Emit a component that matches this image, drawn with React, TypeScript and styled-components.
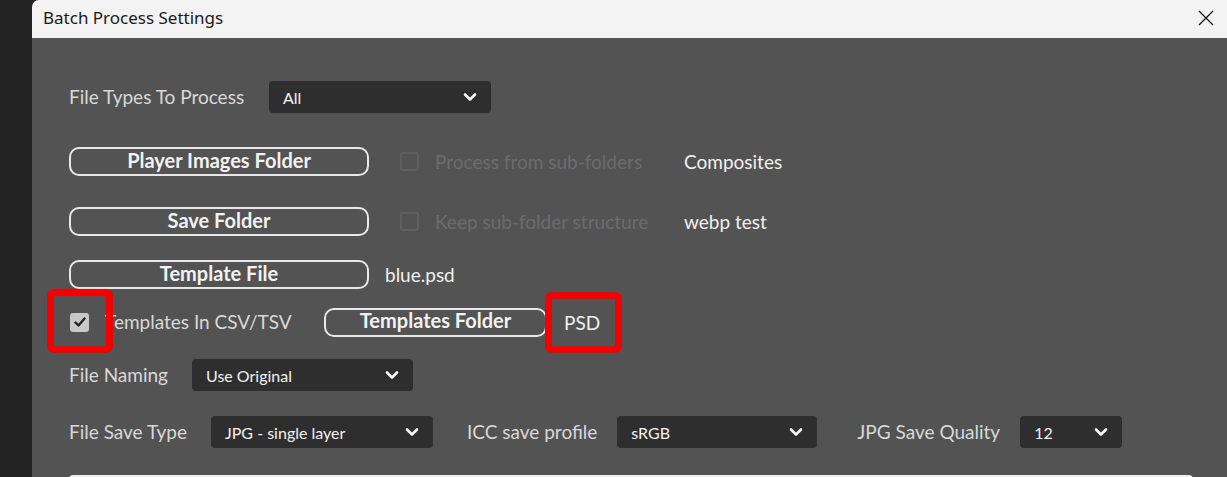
import React from 'react';
import styled, { createGlobalStyle } from 'styled-components';

const GlobalStyle = createGlobalStyle`
  html, body {
    margin: 0;
    padding: 0;
    background: #232323;
    overflow: hidden;
  }
  * {
    box-sizing: border-box;
  }
`;

const Screen = styled.div`
  display: flex;
  width: 1227px;
  height: 477px;
  background: #232323;
  padding-left: 32px;
`;

const Dialog = styled.div`
  flex: 1;
  display: flex;
  flex-direction: column;
  background: #535353;
  border-top-left-radius: 7px;
  overflow: hidden;
  margin-right: -20px;
`;

const TitleBar = styled.div`
  height: 38px;
  flex-shrink: 0;
  display: flex;
  align-items: center;
  justify-content: space-between;
  background: #f3f3f3;
  padding: 0 11px 3px 11px;
  font-family: 'Noto Sans', sans-serif;
  font-size: 17px;
  color: #1a1a1a;
`;

const CloseButton = styled.button`
  border: none;
  background: transparent;
  padding: 0;
  width: 20px;
  height: 20px;
  margin-right: 20px;
  display: flex;
  align-items: center;
  justify-content: center;
  cursor: pointer;
`;

const Body = styled.div`
  display: flex;
  flex-direction: column;
  padding: 0 0 0 37px;
  font-family: Lato, 'Open Sans', sans-serif;
`;

const Row = styled.div<{ $mt: number; $h?: number }>`
  display: flex;
  align-items: center;
  margin-top: ${({ $mt }) => $mt}px;
  height: ${({ $h }) => $h ?? 32}px;
`;

const Label = styled.span<{ $w?: number; $ml?: number }>`
  font-size: 19px;
  color: #d8d8d8;
  width: ${({ $w }) => ($w ? `${$w}px` : 'auto')};
  margin-left: ${({ $ml }) => $ml ?? 0}px;
  padding-bottom: 2px;
  flex-shrink: 0;
  white-space: nowrap;
`;

const Value = styled.span<{ $ml?: number }>`
  font-size: 19px;
  color: #f0f0f0;
  margin-left: ${({ $ml }) => $ml ?? 0}px;
  white-space: nowrap;
`;

const Select = styled.div<{ $w: number; $ml?: number }>`
  width: ${({ $w }) => $w}px;
  height: 32px;
  margin-left: ${({ $ml }) => $ml ?? 0}px;
  background: #2e2e2e;
  border-radius: 4px;
  display: flex;
  align-items: center;
  justify-content: space-between;
  padding: 0 13px 0 14px;
  font-size: 16px;
  color: #f2f2f2;
  flex-shrink: 0;
`;

const OutlineButton = styled.button<{ $w: number; $ml?: number }>`
  width: ${({ $w }) => $w}px;
  height: 29px;
  margin-left: ${({ $ml }) => $ml ?? 0}px;
  border: 2px solid #e8e8e8;
  border-radius: 10px;
  background: transparent;
  color: #f2f2f2;
  font-family: Lato, 'Open Sans', sans-serif;
  font-size: 20px;
  font-weight: 700;
  line-height: 1;
  padding: 0 0 4px;
  flex-shrink: 0;
  cursor: pointer;
`;

const CheckBox = styled.span<{ $checked?: boolean }>`
  width: 19px;
  height: 19px;
  border-radius: 3px;
  flex-shrink: 0;
  display: flex;
  align-items: center;
  justify-content: center;
  border: ${({ $checked }) => ($checked ? 'none' : '2px solid #5f5f5f')};
  background: ${({ $checked }) => ($checked ? '#c9c9c9' : 'transparent')};
`;

const CheckGroup = styled.div<{ $ml: number; $w: number }>`
  display: flex;
  align-items: center;
  gap: 16px;
  margin-left: ${({ $ml }) => $ml}px;
  width: ${({ $w }) => $w}px;
  flex-shrink: 0;
`;

const DisabledText = styled.span`
  font-size: 19px;
  color: #6c6c6c;
  white-space: nowrap;
`;

// red annotation frame drawn over the wrapped item
const Highlight = styled.div<{ $t: number; $r: number; $b: number; $l: number; $ml?: number }>`
  position: relative;
  display: flex;
  align-items: center;
  flex-shrink: 0;
  margin-left: ${({ $ml }) => $ml ?? 0}px;

  &::after {
    content: '';
    position: absolute;
    top: ${({ $t }) => -$t}px;
    right: ${({ $r }) => -$r}px;
    bottom: ${({ $b }) => -$b}px;
    left: ${({ $l }) => -$l}px;
    border: 7px solid #f50000;
    border-radius: 7px;
    pointer-events: none;
  }
`;

const BottomBar = styled.div`
  margin-top: 27px;
  width: 1124px;
  height: 20px;
  background: #efefef;
  border-radius: 4px 4px 0 0;
`;

const Chevron = () => (
  <svg width="16" height="16" viewBox="0 0 16 16">
    <path d="M3 5.5 L8 10.5 L13 5.5" fill="none" stroke="#f5f5f5" strokeWidth="2.6" strokeLinecap="round" strokeLinejoin="round" />
  </svg>
);

const Dropdown = ({ value, w, ml }: { value: string; w: number; ml?: number }) => (
  <Select $w={w} $ml={ml}>
    <span>{value}</span>
    <Chevron />
  </Select>
);

const Tick = () => (
  <svg width="14" height="14" viewBox="0 0 14 14">
    <path d="M2.5 7.5 L5.5 10.5 L11.5 3.5" fill="none" stroke="#222" strokeWidth="2.4" strokeLinecap="round" strokeLinejoin="round" />
  </svg>
);

const App = () => {
  return (
    <>
      <GlobalStyle />
      <Screen>
        <Dialog>
          <TitleBar>
            <span>Batch Process Settings</span>
            <CloseButton aria-label="Close">
              <svg width="16" height="16" viewBox="0 0 16 16">
                <path d="M1 1 L15 15 M15 1 L1 15" stroke="#111" strokeWidth="1.3" />
              </svg>
            </CloseButton>
          </TitleBar>
          <Body>
            <Row $mt={43}>
              <Label $w={200}>File Types To Process</Label>
              <Dropdown value="All" w={222} />
            </Row>

            <Row $mt={34} $h={29}>
              <OutlineButton $w={300}>Player Images Folder</OutlineButton>
              <CheckGroup $ml={31} $w={284}>
                <CheckBox />
                <DisabledText>Process from sub-folders</DisabledText>
              </CheckGroup>
              <Value>Composites</Value>
            </Row>

            <Row $mt={31} $h={29}>
              <OutlineButton $w={300}>Save Folder</OutlineButton>
              <CheckGroup $ml={31} $w={284}>
                <CheckBox />
                <DisabledText>Keep sub-folder structure</DisabledText>
              </CheckGroup>
              <Value>webp test</Value>
            </Row>

            <Row $mt={24} $h={29}>
              <OutlineButton $w={300}>Template File</OutlineButton>
              <Value $ml={16}>blue.psd</Value>
            </Row>

            <Row $mt={18} $h={30}>
              <Highlight $t={24} $r={24} $b={21} $l={23} $ml={1}>
                <CheckBox $checked>
                  <Tick />
                </CheckBox>
              </Highlight>
              <Label $w={219} $ml={16}>Templates In CSV/TSV</Label>
              <OutlineButton $w={223}>Templates Folder</OutlineButton>
              <Highlight $t={19} $r={22} $b={19} $l={19} $ml={17}>
                <Value>PSD</Value>
              </Highlight>
            </Row>

            <Row $mt={22}>
              <Label $w={123}>File Naming</Label>
              <Dropdown value="Use Original" w={221} />
            </Row>

            <Row $mt={25}>
              <Label $w={142}>File Save Type</Label>
              <Dropdown value="JPG - single layer" w={222} />
              <Label $ml={34}>ICC save profile</Label>
              <Dropdown value="sRGB" w={200} ml={20} />
              <Label $ml={40}>JPG Save Quality</Label>
              <Dropdown value="12" w={102} ml={20} />
            </Row>

            <BottomBar />
          </Body>
        </Dialog>
      </Screen>
    </>
  );
};

export default App;
